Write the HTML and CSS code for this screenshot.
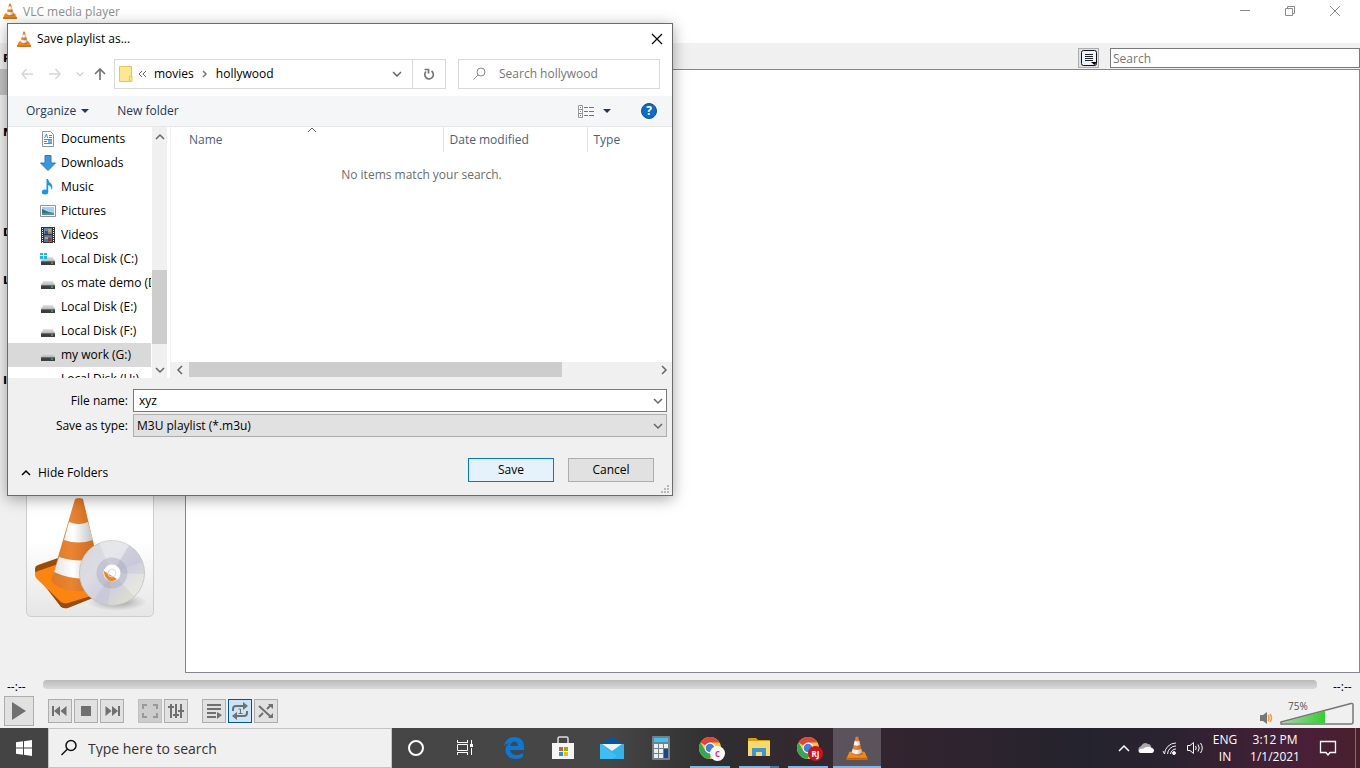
FILE: index.html
```html
<!DOCTYPE html>
<html lang="en">
<head>
<meta charset="utf-8">
<title>VLC media player</title>
<link rel="stylesheet" href="styles.css">
</head>
<body>
<svg class="defs" aria-hidden="true">
  <defs>
    <linearGradient id="orange" x1="0" x2="1"><stop offset="0" stop-color="#dd7a22"/><stop offset=".4" stop-color="#e98434"/><stop offset="1" stop-color="#c4600f"/></linearGradient>
    <linearGradient id="white" x1="0" x2="1"><stop offset="0" stop-color="#e4e4e4"/><stop offset=".4" stop-color="#fff"/><stop offset="1" stop-color="#a8a8a8"/></linearGradient>
    <linearGradient id="metal" x1="0" x2="0" y1="0" y2="1"><stop offset="0" stop-color="#e4e4e6"/><stop offset="1" stop-color="#b4b6b8"/></linearGradient>
    <symbol id="cone" viewBox="0 0 16 16">
      <path d="M3 10.500h10l2 4.500q.2.800-.6.800H1.600q-.8 0-.6-.8z" fill="#f58a0c"/>
      <path d="M1 14.500h14q.2 1.300-.6 1.300H1.600q-.8 0-.6-1.300z" fill="#c9620a"/>
      <path d="M7.200.8Q8 0 8.800.8L12 12.200Q8 14.600 4 12.200z" fill="url(#orange)"/>
      <path d="M6.500 3.200Q8 4 9.500 3.200L10.200 6Q8 7.100 5.800 6zM5.100 8.600Q8 10.100 10.900 8.600L11.600 11Q8 13 4.400 11z" fill="url(#white)"/>
    </symbol>
    <symbol id="drive" viewBox="0 0 16 16">
      <path d="M3.500 6h9l2.500 4H1z" fill="url(#metal)"/><path d="M1 10h14v4H1z" fill="#3d4043"/><path d="M1 10h14v1H1z" fill="#6a6d70"/><path d="M11 11.500h2v1h-2z" fill="#5be35b"/>
    </symbol>
    <symbol id="chrome" viewBox="0 0 24 24">
      <circle cx="12" cy="12" r="11" fill="#fcc934"/>
      <path d="M12 12 2.500 6.500A11 11 0 0 1 21.500 6.500H12z" fill="#e0443a"/>
      <path d="M2.500 6.500A11 11 0 0 0 11.500 23L16 14.500 7.200 14.600z" fill="#35a853"/>
      <circle cx="12" cy="12" r="5.400" fill="#fff"/><circle cx="12" cy="12" r="4.300" fill="#3f7fe8"/>
    </symbol>
    <symbol id="chev" viewBox="0 0 10 10"><path d="M1 3l4 4 4-4" fill="none" stroke="currentColor" stroke-width="1.500"/></symbol>
  </defs>
</svg>

<main class="player">
  <header class="titlebar">
    <svg class="i16"><use href="#cone"/></svg>
    <h1 class="app-title">VLC media player</h1>
    <div class="win-buttons">
      <button aria-label="Minimize"><svg width="12" height="12"><path d="M1 5.500h10" stroke="#8b8b8b"/></svg></button>
      <button aria-label="Restore"><svg width="12" height="12" fill="none" stroke="#8b8b8b"><path d="M1.500 3.500h7v7h-7zM3.500 3V1.500h7v7H9"/></svg></button>
      <button aria-label="Close"><svg width="12" height="12"><path d="M1 1l10 10M11 1 1 11" stroke="#8b8b8b"/></svg></button>
    </div>
  </header>

  <div class="workspace">
    <aside class="sources">
      <h2>Playlist</h2>
      <ul><li class="current"></li><li></li></ul>
      <h2>My Computer</h2>
      <ul><li></li><li></li><li></li></ul>
      <h2>Devices</h2>
      <ul><li></li></ul>
      <h2>Local Network</h2>
      <ul><li></li><li></li><li></li></ul>
      <h2>Internet</h2>
      <div class="cover">
        <svg viewBox="0 0 126 126" width="126" height="126">
          <defs>
            <linearGradient id="disc" x1="0" y1="0" x2="1" y2="1"><stop offset="0" stop-color="#d3d9d6"/><stop offset=".35" stop-color="#dcdce4"/><stop offset=".6" stop-color="#cfcfe0"/><stop offset=".8" stop-color="#dadccf"/><stop offset="1" stop-color="#e4e6ea"/></linearGradient>
            <radialGradient id="shade"><stop offset="0" stop-color="#555" stop-opacity=".6"/><stop offset="1" stop-color="#888" stop-opacity="0"/></radialGradient>
          </defs>
          <ellipse cx="90" cy="112" rx="30" ry="9" fill="url(#shade)"/>
          <path d="M8 87q0-3 3-4l20-7 50 24v10l-40 16q-4 1-7-1L10 94q-2-2-2-7z" transform="translate(0 -8)" fill="#9b4b08"/>
          <path d="M8 85q0-3 3-4l20-7 46 28-36 11q-4 1-7-1L10 89q-2-2-2-4z" fill="#fb850f"/>
          <path d="M48 9q4-2 8 0l20 84q-6 10-28 8-17-1-24-10z" fill="url(#orange)"/>
          <path d="M42 32q10 4 19 0l5 18q-15 5-29 0zM32 67q18 6 39 2l4 18q-27 5-48-5z" fill="url(#white)"/>
          <circle cx="85" cy="83" r="32.500" fill="url(#disc)" stroke="#c3cbc6"/>
          <path d="M85 83 72 53a33 33 0 0 1 30 2zM85 83l22 23a32 32 0 0 0 10-22z" fill="#fff" opacity=".3"/>
          <path d="M85 83 67 110a32 32 0 0 0 14 5zM85 83l17-27a32 32 0 0 1 13 16z" fill="#b4b4c8" opacity=".25"/>
          <circle cx="85" cy="83" r="15.500" fill="#9c9cb2" opacity=".35"/>
          <circle cx="85" cy="83" r="8.500" fill="#fff"/><path d="M77 81l13 8q-5 4-9 1-4-3-4-9z" fill="#f08523"/><circle cx="85" cy="83" r="4" fill="none" stroke="#ddd"/>
        </svg>
      </div>
    </aside>
    <section class="content">
      <div class="search-row">
        <button class="view-button" aria-label="Change view"><svg width="18" height="18"><rect x="1.500" y="1.500" width="15" height="15" rx="2" fill="#eaf4ff" stroke="#111"/><path d="M5 5.500h8M5 7.500h8M5 9.500h8M5 11.500h8" stroke="#222"/><path d="M11 13h6l-2.500 3z"/></svg></button>
        <input class="media-search" type="text" placeholder="Search" aria-label="Search">
      </div>
      <div class="playlist"></div>
    </section>
  </div>

  <div class="seek-row">
    <span>--:--</span>
    <input class="seek" type="range" aria-label="Seek" value="0">
    <span>--:--</span>
  </div>

  <div class="controls">
    <button class="ctl play" aria-label="Play"><svg width="20" height="20"><path d="M3 1v18l14-9z"/></svg></button>
    <div class="group">
      <button class="ctl" aria-label="Previous"><svg width="18" height="18"><path d="M1 4h2v10H1zM3 9l6-5v10zM9.500 9l6-5v10z"/></svg></button>
      <button class="ctl" aria-label="Stop"><svg width="18" height="18"><path d="M4 4h10v10H4z"/></svg></button>
      <button class="ctl" aria-label="Next"><svg width="18" height="18"><path d="M17 4h-2v10h2zM15 9 9 4v10zM8.500 9l-6-5v10z"/></svg></button>
    </div>
    <div class="group">
      <button class="ctl off" aria-label="Fullscreen"><svg width="18" height="18"><path d="M2 7V3h4M12 3h4v4M16 11v4h-4M6 15H2v-4" fill="none" stroke="#999" stroke-width="2"/></svg></button>
      <button class="ctl" aria-label="Extended settings"><svg width="18" height="18"><path d="M3 2h2v14H3zM8 2h2v14H8zM13 2h2v14h-2zM1 4h6v2H1zM6 12h6v2H6zM11 8h6v2h-6z"/></svg></button>
    </div>
    <div class="group">
      <button class="ctl" aria-label="Playlist"><svg width="18" height="18"><path d="M2 2h14v2H2zM2 6h14v2H2zM2 10h9v2H2zM2 14h9v2H2zM12 10l5 3-5 4z"/></svg></button>
      <button class="ctl on" aria-label="Repeat one"><svg width="18" height="18" fill="none" stroke="#707070" stroke-width="2"><path d="M2 9V7q0-3 3-3h8M16 9v2q0 3-3 3H5"/><path d="M12 0l5 4-5 4zM6 10l-5 4 5 4z" fill="#707070" stroke="none"/><path d="M7.500 7h2v4M7.500 11.500h4" stroke-width="1"/></svg></button>
      <button class="ctl" aria-label="Random"><svg width="18" height="18"><path d="M2 4l12 11M2 15l4-4M10 7l4-4" fill="none" stroke="#707070" stroke-width="2"/><path d="M11 2h5v5zM11 16h5v-5z"/></svg></button>
    </div>
    <div class="volume">
      <svg width="14" height="14"><path d="M1 4h3l4-3v12l-4-3H1z" fill="#777"/><path d="M9 4q2 3 0 6M11 3q3 4 0 8" fill="none" stroke="#f29a38" stroke-width="1.500"/></svg>
      <div class="volume-meter">
        <svg width="76" height="26"><defs><linearGradient id="vol"><stop offset="0" stop-color="#a6d6a6"/><stop offset="1" stop-color="#2fd12f"/></linearGradient></defs><path d="M2 24 46 12v12z" fill="url(#vol)"/><path d="M2 23 72 4.500q2-.5 2 1.500v17q0 2-2 2H2z" fill="none" stroke="#777" stroke-width="1.500"/></svg>
        <span class="volume-label">75%</span>
      </div>
    </div>
  </div>
</main>

<footer class="taskbar">
  <button class="start" aria-label="Start"><svg width="16" height="16" fill="#fff"><path d="M0 2.300 7 1.300V7.500H0zM8 1.200 16 0v7.500H8zM0 8.500h7v6.200L0 13.700zM8 8.500h8V16l-8-1.200z"/></svg></button>
  <label class="task-search">
    <svg width="18" height="18" fill="none" stroke="#111" stroke-width="1.500"><circle cx="11" cy="6.500" r="5"/><path d="M7.500 10 1.500 16"/></svg>
    <input type="text" placeholder="Type here to search" aria-label="Type here to search">
  </label>
  <nav class="apps">
    <button aria-label="Cortana"><svg width="24" height="24"><circle cx="12" cy="12" r="7" fill="none" stroke="#fff" stroke-width="2"/></svg></button>
    <button aria-label="Task view"><svg width="24" height="24" fill="none" stroke="#fff"><path d="M4.500 8.500h10v6h-10zM4.500 4v2.500M14.500 4v2.500M4.500 16.500V19M14.500 16.500V19M4 6.500h11M4 16.500h11M18.500 4v4M18.500 12v7"/><path d="M17 8h3v3h-3z" fill="#fff" stroke="none"/></svg></button>
    <button aria-label="Edge"><svg width="24" height="24"><path d="M2 10Q4 1 12.500 1 22 1.500 22 11v3H8q.5 5 7 5 3 0 6-2v4q-3 2-7 2-10-.5-10.500-9Q3.500 9 8 7q-4 .5-6 3zm6 0h8q0-4-3.500-4.500Q9 5.500 8 10z" fill="#0a78d6"/></svg></button>
    <button aria-label="Store"><svg width="24" height="24"><path d="M7 8V2.500Q7 1 8.500 1h7Q17 1 17 2.500V8" fill="none" stroke="#ddd" stroke-width="1.500"/><path d="M1 7h22v16H1z" fill="#f5f5f5"/><path d="M8 11h4v4H8z" fill="#f25022"/><path d="M13 11h4v4h-4z" fill="#7fba00"/><path d="M8 16h4v4H8z" fill="#00a4ef"/><path d="M13 16h4v4h-4z" fill="#ffb900"/></svg></button>
    <button aria-label="Mail"><svg width="24" height="24"><path d="M0 8.500 12 1l12 7.500z" fill="#0656a8"/><path d="M0 8h24v15H0z" fill="#2fb4ee"/><path d="M0 8l17 12-5 3H0z" fill="#3cc0f4"/><path d="M2 8h20l-10 7z" fill="#f3f3f3"/></svg></button>
    <button aria-label="Calculator"><svg width="24" height="24"><rect x="3" width="18" height="24" rx="1" fill="#76808a"/><path d="M5 2h14v4H5z" fill="#3ac4f0"/><path d="M5 8h4v4H5zM10 8h4v4h-4zM15 8h4v4h-4zM5 13h4v4H5zM10 13h4v4h-4zM5 18h4v4H5zM10 18h4v4h-4z" fill="#eceff1"/><path d="M15 13h4v9h-4z" fill="#124a86"/></svg></button>
    <button class="open" aria-label="Chrome"><svg width="24" height="24"><use href="#chrome"/></svg><span class="badge pink">C</span></button>
    <button class="open stacked" aria-label="File Explorer"><svg width="24" height="24"><path d="M1 3q0-1 1-1h7l2 2h11q1 0 1 1v3H1z" fill="#dc9d08"/><path d="M1 5h22v15H1z" fill="#fcd867"/><path d="M5 12h14v8h-4v-4H9v4H5z" fill="#3a96dd"/></svg></button>
    <button class="open" aria-label="Chrome, RJ"><svg width="24" height="24"><use href="#chrome"/></svg><span class="badge red">RJ</span></button>
    <button class="open active" aria-label="VLC"><svg width="24" height="24"><use href="#cone"/></svg></button>
  </nav>
  <div class="tray">
    <svg width="12" height="12"><path d="M1 9l5-5 5 5" fill="none" stroke="#fff" stroke-width="1.500"/></svg>
    <svg width="16" height="16"><path d="M1 11q-2-3 2-5 3-5 7-2 3 0 3 3 3 1 3 4z" fill="#aaa"/><path d="M2 13q-3-2 0-4 4 0 6-2 4-1 5 1 4 1 2.500 4-.5 1-2 1z" fill="#fff"/></svg>
    <svg width="16" height="16" fill="none" stroke="#eee"><path d="M2.500 14A11.500 11.500 0 0 1 14 3M5.500 14A8.500 8.500 0 0 1 14 6M8.500 14A5.500 5.500 0 0 1 14 9M2.500 14 1 11"/><circle cx="12" cy="13" r="1.500" fill="#fff"/></svg>
    <svg width="18" height="16" fill="none" stroke="#fff"><path d="M1.500 5.500H4l3.500-3v11l-3.500-3H1.500zM9.500 6q1.500 2 0 4M12 4.500q2.500 3.500 0 7M14.500 3q3.500 5 0 10"/></svg>
    <div class="tray-text lang"><span>ENG</span><span>IN</span></div>
    <div class="tray-text clock"><span>3:12 PM</span><span>1/1/2021</span></div>
    <button class="notify" aria-label="Notifications"><svg width="18" height="18" fill="none" stroke="#fff" stroke-width="1.300"><path d="M1.500 2.500h15v11H11l-2 2.500-2-2.500H1.500z"/></svg></button>
  </div>
</footer>

<section class="dialog" role="dialog" aria-labelledby="dialog-title">
  <header class="dialog-title">
    <svg class="i16"><use href="#cone"/></svg>
    <h2 id="dialog-title">Save playlist as...</h2>
    <button aria-label="Close dialog"><svg width="12" height="12"><path d="M1 1l10 10M11 1 1 11" stroke="#000" stroke-width="1.200"/></svg></button>
  </header>

  <div class="nav-row">
    <div class="nav-buttons">
      <button aria-label="Back"><svg width="14" height="14" fill="none" stroke="#d6d6d6" stroke-width="1.500"><path d="M13 7H2M6.500 2 2 7l4.500 5"/></svg></button>
      <button aria-label="Forward"><svg width="14" height="14" fill="none" stroke="#d6d6d6" stroke-width="1.500"><path d="M1 7h11M7.500 2 12 7l-4.500 5"/></svg></button>
      <button class="recent" aria-label="Recent locations"><svg width="8" height="8"><use href="#chev"/></svg></button>
      <button aria-label="Up"><svg width="14" height="14" fill="none" stroke="#757575" stroke-width="1.700"><path d="M7 13V2M2 7l5-5 5 5"/></svg></button>
    </div>
    <div class="address">
      <svg width="14" height="16"><path d="M.5.500h12V15.500H.5z" fill="#ffe694" stroke="#eac54f"/><path d="M10.500 10h2.500v5.500h-2.500z" fill="#ffe694" stroke="#eac54f"/></svg>
      <svg class="laquo" width="9" height="8" fill="none" stroke="#666"><path d="M4 1 1 4l3 3M8 1 5 4l3 3"/></svg>
      <a href="#movies">movies</a>
      <svg class="crumb-arrow" width="6" height="8" fill="none" stroke="#777" stroke-width="1.500"><path d="M1 1l3 3-3 3"/></svg>
      <a href="#hollywood">hollywood</a>
      <button class="drop" aria-label="Previous locations"><svg width="10" height="10"><use href="#chev"/></svg></button>
      <button class="refresh" aria-label="Refresh"><svg width="12" height="14" fill="none" stroke="#777" stroke-width="1.700"><path d="M8.500 4A4.300 4.300 0 1 1 3 4.500"/><path d="M1.500 2.500h4v4"/></svg></button>
    </div>
    <label class="folder-search">
      <svg width="13" height="13" fill="none" stroke="#848b93"><circle cx="8" cy="5" r="4"/><path d="M5 8l-4.500 4.500"/></svg>
      <input type="text" placeholder="Search hollywood" aria-label="Search hollywood">
    </label>
  </div>

  <div class="toolbar">
    <button>Organize <svg width="8" height="4"><path d="M0 0h8L4 4z" fill="#1e395b"/></svg></button>
    <button>New folder</button>
    <button class="view" aria-label="View"><svg width="17" height="13"><path d="M.5.500h4v12h-4zM0 4.500h5M0 8.500h5" fill="#fff" stroke="#999"/><path d="M6 2.500h4M11 2.500h5M6 6.500h4M11 6.500h5M6 10.500h4M11 10.500h5" stroke="#777"/><path d="M2 2h1v1H2z" fill="#393"/><path d="M2 6h1v1H2z" fill="#39f"/><path d="M2 10h1v1H2z" fill="#e22"/></svg><svg width="8" height="4"><path d="M0 0h8L4 4z" fill="#1e395b"/></svg></button>
    <button class="help" aria-label="Help">?</button>
  </div>

  <div class="browser">
    <nav class="tree">
      <a href="#documents"><svg class="i16"><path d="M2.500.500h8l3 3v12h-11z" fill="#fff" stroke="#8a949c"/><path d="M4.500 7 6.500 3l1 4M9 4.500h3M9 6.500h3M4 8.500h8M4 10.500h3M4 12.500h8" fill="none" stroke="#2f96d8"/><path d="M8 9h4v3H8z" fill="#69b6e6"/></svg>Documents</a>
      <a href="#downloads"><svg class="i16"><path d="M5 .500h6V8h4.500L8 15.500.500 8H5z" fill="#3a96dd" stroke="#2b7cc0"/></svg>Downloads</a>
      <a href="#music"><svg class="i16"><ellipse cx="5" cy="13" rx="3.200" ry="2.500" fill="#0a9bf5"/><path d="M6.500 0H8q.5 3 3 4.500 2.500 3 .5 6.500 0-4-3.300-5V13H6.500z" fill="#0a9bf5"/></svg>Music</a>
      <a href="#pictures"><svg class="i16"><path d="M.5 2.500h15v11H.5z" fill="#fff" stroke="#8d9399"/><path d="M2 4h12v8H2z" fill="#a4d3f2"/><path d="M2 6q5 3 12 4v2H2z" fill="#377368"/><path d="M2 10h12v2H2z" fill="#4f8fc0"/></svg>Pictures</a>
      <a href="#videos"><svg class="i16"><path d="M1 0h14v16H1z" fill="#333"/><path d="M4 1h8v6H4z" fill="#6286c2"/><path d="M4 8h8v7H4z" fill="#4975bb"/><path d="M8 2h3v3H8zM5 10h3v2H5z" fill="#d9a227"/><path d="M5 4h3v3H5zM8 11h3v3H8z" fill="#883b2b"/><path d="M2.500 1v15M13.500 1v15" stroke="#fff" stroke-dasharray="1 1"/></svg>Videos</a>
      <a href="#c"><svg class="i16"><use href="#drive"/><path d="M0 2h3v2H0zM4 2h3v2H4zM0 5h3v3H0zM4 5h3v3H4z" fill="#18b5f0"/></svg>Local Disk (C:)</a>
      <a href="#d"><svg class="i16"><use href="#drive"/></svg>os mate demo (D:)</a>
      <a href="#e"><svg class="i16"><use href="#drive"/></svg>Local Disk (E:)</a>
      <a href="#f"><svg class="i16"><use href="#drive"/></svg>Local Disk (F:)</a>
      <a href="#g" class="selected"><svg class="i16"><use href="#drive"/></svg>my work (G:)</a>
      <a href="#h"><svg class="i16"></svg>Local Disk (H:)</a>
    </nav>
    <div class="vscroll">
      <svg class="flip" width="10" height="10"><use href="#chev"/></svg>
      <div class="track"><div class="thumb"></div></div>
      <svg width="10" height="10"><use href="#chev"/></svg>
    </div>
    <div class="files">
      <table>
        <thead><tr><th class="col-name">Name<svg class="sort" width="10" height="10"><path d="M1 7l4-4 4 4" fill="none" stroke="#666"/></svg></th><th class="col-date">Date modified</th><th>Type</th></tr></thead>
      </table>
      <p>No items match your search.</p>
      <div class="hscroll">
        <svg class="left" width="10" height="10"><use href="#chev"/></svg>
        <div class="track"><div class="thumb"></div></div>
        <svg class="right" width="10" height="10"><use href="#chev"/></svg>
      </div>
    </div>
  </div>

  <form class="save-form">
    <div class="fields">
      <label for="file-name">File name:</label>
      <div class="combo"><input id="file-name" type="text" value="xyz"><svg width="10" height="10"><use href="#chev"/></svg></div>
      <label for="file-type">Save as type:</label>
      <div class="combo"><select id="file-type"><option>M3U playlist (*.m3u)</option></select><svg width="10" height="10"><use href="#chev"/></svg></div>
    </div>
    <div class="actions">
      <button type="button" class="hide"><svg class="flip" width="10" height="10"><use href="#chev"/></svg>Hide Folders</button>
      <button type="button" class="push primary">Save</button>
      <button type="button" class="push">Cancel</button>
    </div>
    <svg class="grip" width="8" height="8"><path d="M6 0h2v2H6zM3 3h2v2H3zM6 3h2v2H6zM0 6h2v2H0zM3 6h2v2H3zM6 6h2v2H6z" fill="#b8b8b8"/></svg>
  </form>
</section>
</body>
</html>
```
FILE: styles.css
```css
* { box-sizing: border-box; }
body {
  margin: 0;
  height: 100vh;
  display: flex;
  flex-direction: column;
  overflow: hidden;
  position: relative;
  background: #f0f0f0;
  color: #000;
  font: 12px/16px "Open Sans", "Noto Sans", sans-serif;
}
button, input, select { font: inherit; color: inherit; }
button { padding: 0; border: 0; background: none; display: flex; align-items: center; justify-content: center; }
svg { display: block; flex: none; }
h1, h2, p, ul { margin: 0; padding: 0; font-weight: normal; font-size: 12px; list-style: none; }
a { color: inherit; text-decoration: none; }
.defs { position: absolute; width: 0; height: 0; }
.i16 { width: 16px; height: 16px; }
.flip { transform: rotate(180deg); }

/* Player window */
.player { flex: 1; min-height: 0; display: flex; flex-direction: column; }
.titlebar { height: 43px; padding: 3px 3px 0 2px; display: flex; align-items: flex-start; gap: 5px; background: #fff; }
.app-title { color: #8f8f8f; line-height: 18px; }
.win-buttons { margin-left: auto; display: flex; }
.win-buttons button { width: 45px; height: 15px; }
.workspace { flex: 1; min-height: 0; display: flex; }
.sources { width: 185px; padding-top: 4px; display: flex; flex-direction: column; }
.sources h2 { height: 22px; padding: 1px 0 0 3px; font: bold 11px/22px "DejaVu Sans", sans-serif; }
.sources li { height: 26px; }
.sources .current { background: #c4c4c4; }
.cover { width: 128px; height: 128px; margin: auto auto 56px 26px; border: 1px solid #cfcfcf; border-radius: 5px; background: linear-gradient(#fff 40%, #e6e6e6); }
.content { flex: 1; display: flex; flex-direction: column; }
.search-row { height: 26px; display: flex; align-items: center; justify-content: flex-end; gap: 11px; padding-top: 3px; }
.view-button { width: 21px; height: 20px; border: 1px solid #adadad; background: #e1e1e1; }
.media-search { width: 250px; height: 20px; padding: 2px 2px 0; border: 1px solid #7a7a7a; background: #fff; }
::placeholder { color: #767676; opacity: 1; }
.playlist { flex: 1; border: 1px solid #828790; background: #fff; }
.seek-row { height: 23px; padding: 0 7px; display: flex; align-items: center; gap: 16px; }
.seek-row span { width: 20px; padding-top: 4px; }
.seek { flex: 1; height: 9px; margin: 0; appearance: none; border-radius: 4px; background: linear-gradient(#b9b9b9, #dadada); }
.seek::-webkit-slider-thumb { appearance: none; width: 0; height: 0; }
.controls { height: 32px; padding: 0 5px 2px 4px; display: flex; align-items: center; gap: 14px; }
.group { display: flex; gap: 2px; }
.ctl { width: 24px; height: 24px; border: 1px solid #adadad; background: #e1e1e1; fill: #707070; }
.ctl.play { width: 30px; height: 30px; }
.ctl.off { background: #ccc; border-color: #bfbfbf; }
.ctl.on { background: #cce4f7; border-color: #005499; }
.volume { margin-left: auto; display: flex; align-items: flex-end; gap: 6px; }
.volume-meter { position: relative; padding-top: 2px; }
.volume-label { position: absolute; left: 9px; top: 2px; font-size: 10px; line-height: 14px; color: #555; }

/* Taskbar */
.taskbar { height: 40px; display: flex; color: #fff; background: linear-gradient(90deg, #444 0, #464646 45%, #2f2d2f 53%, #35262f 62%, #30242f 68%, #24232d 80%, #2a2230 86%, #4a1f38 96%, #48202c); }
.start { width: 48px; }
.task-search { width: 344px; border: 1px solid #c4c4c4; background: #f0f0f0; display: flex; align-items: center; gap: 10px; padding-left: 11px; }
.task-search input { flex: 1; min-width: 0; border: 0; padding: 2px 0 0; background: none; color: #222; font-size: 14px; outline: 0; }
.task-search ::placeholder { color: #333; }
.apps { display: flex; gap: 1px; }
.apps button { width: 48px; height: 40px; position: relative; }
.apps .open::after { content: ""; position: absolute; left: 4px; right: 4px; bottom: 0; height: 2px; background: #76b9ed; }
.apps .stacked::after { background: linear-gradient(90deg, #76b9ed 31px, #4d7a9f 31px); }
.apps .active { background: #5a535c; }
.apps .active::after { left: 0; right: 0; }
.badge { position: absolute; left: 24px; top: 18px; width: 15px; height: 15px; border-radius: 50%; font-size: 8px; line-height: 15px; font-weight: bold; text-align: center; }
.badge.pink { background: #fff; color: #ec1e8c; }
.badge.red { background: #d3101c; color: #fff; }
.tray { margin-left: auto; display: flex; align-items: center; gap: 8px; padding-right: 4px; }
.tray-text { display: flex; flex-direction: column; text-align: center; line-height: 17px; }
.lang { width: 26px; }
.clock { width: 58px; }
.notify { width: 44px; height: 40px; border-right: 1px solid #876878; padding-right: 12px; }

/* Save dialog */
.dialog { position: absolute; left: 7px; top: 23px; width: min(666px, calc(100% - 14px)); border: 1px solid #6b6b6b; background: #fff; box-shadow: 0 3px 14px rgba(0, 0, 0, .35); }
.dialog-title { height: 29px; padding: 0 9px 0 8px; display: flex; align-items: center; gap: 5px; }
.dialog-title button { margin-left: auto; width: 12px; height: 12px; }
.nav-row { height: 43px; padding: 0 12px 2px; display: flex; align-items: center; gap: 12px; }
.nav-buttons { width: 82px; display: flex; align-items: center; gap: 14px; }
.nav-buttons .recent { color: #ccc; margin-right: -5px; }
.address { flex: 1; height: 30px; padding-left: 4px; border: 1px solid #d9d9d9; display: flex; align-items: center; }
.laquo { margin: 0 7px 0 5px; }
.crumb-arrow { margin: 0 8px; }
.drop { margin-left: auto; width: 30px; color: #666; }
.refresh { width: 33px; height: 28px; border-left: 1px solid #d9d9d9; }
.folder-search { width: 202px; height: 30px; padding-left: 14px; border: 1px solid #d9d9d9; display: flex; align-items: center; gap: 13px; }
.folder-search input { flex: 1; min-width: 0; border: 0; padding: 0; outline: 0; }
.toolbar { height: 31px; padding: 0 15px 0 18px; display: flex; align-items: center; gap: 28px; border-bottom: 1px solid #e5e7ea; background: #f5f6f7; color: #1e395b; }
.toolbar button { gap: 5px; }
.toolbar .view { margin-left: auto; gap: 8px; }
.toolbar .help { width: 16px; height: 16px; margin-left: 2px; border-radius: 50%; border: 1px solid #14518c; background: #0a6cce; color: #fff; font-weight: bold; }
.browser { height: 251px; display: flex; background: #fff; }
.tree { width: 144px; overflow: hidden; border-right: 1px solid #fff; }
.tree a { height: 24px; padding-left: 32px; display: flex; align-items: center; gap: 5px; white-space: nowrap; }
.tree .selected { background: #d9d9d9; }
.vscroll { width: 15px; padding: 5px 0 3px; display: flex; flex-direction: column; align-items: center; background: #f0f0f0; color: #666; }
.vscroll .track { flex: 1; width: 15px; padding-top: 128px; }
.vscroll .thumb { height: 74px; background: #cdcdcd; }
.files { flex: 1; min-width: 0; margin-left: 3px; border-left: 1px solid #f0f0f0; display: flex; flex-direction: column; }
.files table { width: 100%; table-layout: fixed; border-collapse: collapse; color: #4c607a; }
.files th { height: 25px; padding: 0 0 0 6px; text-align: left; font-weight: normal; position: relative; }
.files .col-name { width: 272px; padding-left: 18px; border-right: 1px solid #e5e5e5; }
.files .col-date { width: 144px; border-right: 1px solid #e5e5e5; }
.sort { position: absolute; left: 50%; top: -2px; }
.files p { padding-top: 15px; text-align: center; color: #6d6d6d; }
.hscroll { height: 16px; margin-top: auto; padding: 0 3px 1px 4px; display: flex; align-items: center; gap: 4px; background: #f0f0f0; color: #666; }
.hscroll .track { flex: 1; }
.hscroll .thumb { width: 80%; height: 15px; background: #cdcdcd; }
.left { transform: rotate(90deg); }
.right { transform: rotate(-90deg); }
.save-form { position: relative; height: 117px; padding: 11px 5px 0 13px; background: #f0f0f0; }
.fields { display: grid; grid-template-columns: 107px 1fr; gap: 2px 5px; align-items: center; }
.fields label { text-align: right; }
.combo { display: grid; align-items: center; }
.combo > * { grid-area: 1 / 1; }
.combo svg { justify-self: end; margin-right: 4px; color: #666; pointer-events: none; }
.combo input, .combo select { width: 100%; height: 23px; margin: 0; padding: 0 5px; appearance: none; border: 1px solid #7a7a7a; border-radius: 0; background: #fff; }
.combo select { padding: 0 3px; border-color: #adadad; background: #e1e1e1; }
.actions { display: flex; align-items: center; gap: 14px; padding: 21px 13px 0 0; }
.hide { margin-right: auto; gap: 7px; padding-top: 6px; }
.push { width: 86px; height: 24px; border: 1px solid #adadad; background: #e1e1e1; }
.push.primary { border-color: #0078d7; background: #e5f1fb; }
.grip { position: absolute; right: 3px; bottom: 2px; }
```
